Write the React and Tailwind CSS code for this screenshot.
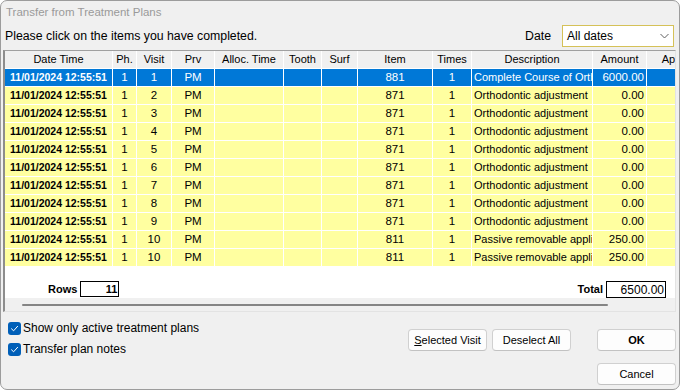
import React from "react";

const cols = [
  { w: "w-[108px]", label: "Date Time", align: "justify-center" },
  { w: "w-[24px]", label: "Ph.", align: "justify-center" },
  { w: "w-[35px]", label: "Visit", align: "justify-center" },
  { w: "w-[43px]", label: "Prv", align: "justify-center" },
  { w: "w-[69px]", label: "Alloc. Time", align: "justify-center" },
  { w: "w-[38px]", label: "Tooth", align: "justify-center" },
  { w: "w-[36px]", label: "Surf", align: "justify-center" },
  { w: "w-[75px]", label: "Item", align: "justify-center" },
  { w: "w-[39px]", label: "Times", align: "justify-center" },
  { w: "w-[121px]", label: "Description", align: "justify-start pl-[2px]" },
  { w: "w-[54px]", label: "Amount", align: "justify-end pr-[2px]" },
  { w: "w-[53px]", label: "Appt", align: "justify-center" },
];

const dt = "11/01/2024 12:55:51";
const rows = [
  [dt, "1", "1", "PM", "", "", "", "881", "1", "Complete Course of Orthodontic Treatment", "6000.00", ""],
  ...[2, 3, 4, 5, 6, 7, 8, 9].map((v) => [dt, "1", String(v), "PM", "", "", "", "871", "1", "Orthodontic adjustment", "0.00", ""]),
  [dt, "1", "10", "PM", "", "", "", "811", "1", "Passive removable appliance", "250.00", ""],
  [dt, "1", "10", "PM", "", "", "", "811", "1", "Passive removable appliance", "250.00", ""],
];

function cellSize(ci) {
  if (ci === 0) return " font-bold text-[10.5px]";
  if (ci === 9) return " text-[11px]";
  return " text-[11.5px]";
}

function Check() {
  return (
    <div className="w-[13px] h-[13px] rounded-[3px] bg-[#005fb8] flex items-center justify-center shrink-0">
      <svg width="9" height="9" viewBox="0 0 9 9" fill="none">
        <path d="M1.5 4.8 L3.6 6.8 L7.6 2.3" stroke="white" strokeWidth="1" strokeLinecap="round" strokeLinejoin="round" />
      </svg>
    </div>
  );
}

function Btn({ children, className = "" }) {
  return (
    <div className={"h-[22px] bg-[#fdfdfd] border border-[#d0d0d0] border-b-[#c2c2c2] rounded-[4px] text-[11px] flex items-center justify-center " + className}>
      {children}
    </div>
  );
}

export default function App() {
  return (
    <div className="w-[681px] h-[391px] bg-white font-['Liberation_Sans',Arial,sans-serif] text-black">
      <div className="w-[680px] h-[390px] border border-[#9c9c9c] rounded-[7px] bg-[#f0f0f0] flex flex-col overflow-hidden">
        <div className="h-[24px] shrink-0 pl-[5px] flex items-center text-[11.5px] text-[#9a9a9a]">
          Transfer from Treatment Plans
        </div>
        <div className="h-[22px] shrink-0 flex items-center justify-between pl-[4px] pr-[5px]">
          <div className="text-[12.3px]">Please click on the items you have completed.</div>
          <div className="flex items-center">
            <div className="text-[12.3px] mr-[11px]">Date</div>
            <div className="w-[112px] h-[22px] border border-[#d5c158] bg-white flex items-center justify-between pl-[4px] pr-[4px] text-[12px]">
              <span>All dates</span>
              <svg width="9" height="6" viewBox="0 0 9 6" fill="none">
                <path d="M0.5 1 L4.5 5 L8.5 1" stroke="#606060" strokeWidth="1" />
              </svg>
            </div>
          </div>
        </div>

        <div className="mt-[3px] ml-[2px] mr-[3px] h-[262px] shrink-0 border-l-2 border-l-[#8d8d8d] border-t border-t-[#a0a0a0] border-r border-r-[#e3e3e3] border-b border-b-[#e3e3e3] bg-white flex flex-col overflow-hidden">
          <div className="flex h-[18px] shrink-0 bg-[#f0f0f0] border-b border-white text-[11px]">
            {cols.map((c, i) => (
              <div key={i} className={c.w + " shrink-0 border-r border-white flex items-center whitespace-nowrap overflow-hidden justify-center"}>
                {c.label}
              </div>
            ))}
          </div>
          {rows.map((r, ri) => {
            const sel = ri === 0;
            return (
              <div key={ri} className={"flex h-[18px] shrink-0 border-b border-white " + (sel ? "bg-[#0078d7] text-white" : "bg-[#ffffa0] text-black")}>
                {r.map((v, ci) => (
                  <div
                    key={ci}
                    className={
                      cols[ci].w +
                      " shrink-0 border-r border-white flex items-center whitespace-nowrap overflow-hidden " +
                      cols[ci].align +
                      cellSize(ci)
                    }
                  >
                    {v}
                  </div>
                ))}
              </div>
            );
          })}
          <div className="h-[31px] shrink-0 flex items-start justify-between pt-[14px] pl-[43px] pr-[9px]">
            <div className="flex items-center">
              <span className="text-[11px] font-bold mr-[3px]">Rows</span>
              <div className="w-[39px] h-[16px] border border-black flex items-center justify-end pr-[1px] text-[11px] font-bold">11</div>
            </div>
            <div className="flex items-center">
              <span className="text-[11px] font-bold mr-[3px]">Total</span>
              <div className="w-[60px] h-[17px] border border-black flex items-center justify-end pr-[1px] text-[12px]">6500.00</div>
            </div>
          </div>
          <div className="h-[13px] shrink-0 bg-[#f0f0f0] flex items-center">
            <div className="ml-[17px] w-[586px] h-[2px] rounded-full bg-[#858585]" />
          </div>
        </div>

        <div className="mt-[6px] flex justify-between pl-[7px] pr-[3px]">
          <div className="flex flex-col gap-[1px]">
            <div className="h-[20px] flex items-center">
              <Check />
              <span className="ml-[2px] text-[12px]">Show only active treatment plans</span>
            </div>
            <div className="h-[20px] flex items-center">
              <Check />
              <span className="ml-[2px] text-[12px]">Transfer plan notes</span>
            </div>
          </div>
          <div className="mt-[11px] flex items-start">
            <Btn className="w-[79px]">
              <span><span className="underline">S</span>elected Visit</span>
            </Btn>
            <Btn className="w-[79px] ml-[5px]">Deselect All</Btn>
            <div className="ml-[26px] flex flex-col">
              <Btn className="w-[79px] font-bold">OK</Btn>
              <Btn className="w-[79px] mt-[12px]">Cancel</Btn>
            </div>
          </div>
        </div>
      </div>
    </div>
  );
}
